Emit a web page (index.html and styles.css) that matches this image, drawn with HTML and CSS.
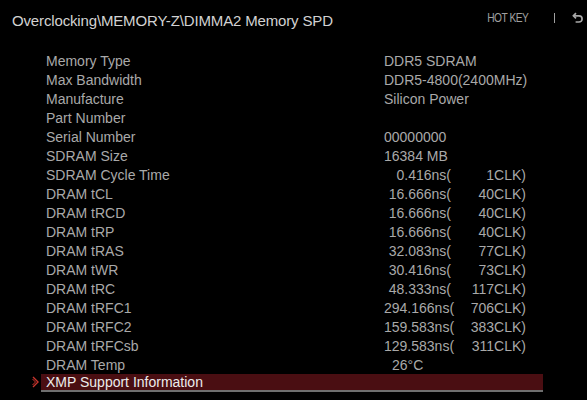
FILE: index.html
```html
<!DOCTYPE html>
<html>
<head>
<meta charset="utf-8">
<link rel="stylesheet" href="styles.css">
</head>
<body>
<div class="screen">
  <header class="top">
    <div class="title">Overclocking\MEMORY-Z\DIMMA2 Memory SPD</div>
    <div class="hotkey">
      <span class="hk">HOT KEY</span>
      <span class="sep"></span>
      <svg class="back" width="12" height="12" viewBox="0 0 12 12"><path d="M4 1.2 L1.4 3.8 L4 6.4" fill="none" stroke="#a8a8a8" stroke-width="1.7"/><path d="M1.8 3.8 H7 A3.1 3.1 0 0 1 7 10 H3.6" fill="none" stroke="#a8a8a8" stroke-width="1.7"/></svg>
    </div>
  </header>
  <div class="list">
    <div class="row"><span class="label">Memory Type</span><span class="val">DDR5 SDRAM</span></div>
    <div class="row"><span class="label">Max Bandwidth</span><span class="val">DDR5-4800(2400MHz)</span></div>
    <div class="row"><span class="label">Manufacture</span><span class="val">Silicon Power</span></div>
    <div class="row"><span class="label">Part Number</span><span class="val"></span></div>
    <div class="row"><span class="label">Serial Number</span><span class="val">00000000</span></div>
    <div class="row"><span class="label">SDRAM Size</span><span class="val">16384 MB</span></div>
    <div class="row"><span class="label">SDRAM Cycle Time</span><span class="val"><span class="ns">0.416ns(</span><span class="clk">1CLK)</span></span></div>
    <div class="row"><span class="label">DRAM tCL</span><span class="val"><span class="ns">16.666ns(</span><span class="clk">40CLK)</span></span></div>
    <div class="row"><span class="label">DRAM tRCD</span><span class="val"><span class="ns">16.666ns(</span><span class="clk">40CLK)</span></span></div>
    <div class="row"><span class="label">DRAM tRP</span><span class="val"><span class="ns">16.666ns(</span><span class="clk">40CLK)</span></span></div>
    <div class="row"><span class="label">DRAM tRAS</span><span class="val"><span class="ns">32.083ns(</span><span class="clk">77CLK)</span></span></div>
    <div class="row"><span class="label">DRAM tWR</span><span class="val"><span class="ns">30.416ns(</span><span class="clk">73CLK)</span></span></div>
    <div class="row"><span class="label">DRAM tRC</span><span class="val"><span class="ns">48.333ns(</span><span class="clk">117CLK)</span></span></div>
    <div class="row"><span class="label">DRAM tRFC1</span><span class="val"><span class="ns">294.166ns(</span><span class="clk">706CLK)</span></span></div>
    <div class="row"><span class="label">DRAM tRFC2</span><span class="val"><span class="ns">159.583ns(</span><span class="clk">383CLK)</span></span></div>
    <div class="row"><span class="label">DRAM tRFCsb</span><span class="val"><span class="ns">129.583ns(</span><span class="clk">311CLK)</span></span></div>
    <div class="row"><span class="label">DRAM Temp</span><span class="val"><span class="temp">26°C</span></span></div>
    <div class="row sel">
      <svg class="chev" width="8" height="12" viewBox="0 0 8 12"><path d="M1 1 L6 6 L1 11" fill="none" stroke="#c8342c" stroke-width="1.4"/><path d="M0.5 3 L3.5 6 L0.5 9" fill="none" stroke="#c8342c" stroke-width="1"/></svg>
      <span class="label">XMP Support Information</span>
    </div>
  </div>
</div>
</body>
</html>
```

FILE: styles.css
```css
html, body {
  margin: 0;
  padding: 0;
  background: #000;
}
.screen {
  width: 587px;
  height: 400px;
  background: #000;
  font-family: "Liberation Sans", Arial, sans-serif;
  overflow: hidden;
}
.top {
  display: flex;
  justify-content: space-between;
  align-items: center;
  height: 40px;
  padding: 0 3px 0 12px;
}
.title {
  color: #d2d2d2;
  font-size: 15px;
  letter-spacing: -0.15px;
}
.hotkey {
  display: flex;
  align-items: center;
  color: #a0a0a0;
  margin-top: -4px;
}
.hk {
  display: inline-block;
  font-size: 12px;
  letter-spacing: -0.6px;
  transform: scaleX(0.85);
  transform-origin: right center;
}
.sep {
  width: 1.5px;
  height: 10px;
  background: #a0a0a0;
  margin: 0 17px 0 25px;
}
.list {
  display: flex;
  flex-direction: column;
  padding-top: 11px;
}
.row {
  display: flex;
  height: 19px;
  align-items: center;
  font-size: 14px;
  color: #a9a9a9;
  padding-left: 46px;
}
.label {
  width: 338px;
  flex: none;
}
.val {
  display: flex;
}
.ns {
  width: 67px;
  text-align: right;
}
.clk {
  width: 75px;
  text-align: right;
}
.temp {
  margin-left: 8px;
}
.sel {
  position: relative;
  margin-left: 41px;
  padding-left: 5px;
  width: 497px;
  height: 16px;
  background: #4a0e12;
  border-bottom: 2px solid #6e6e6e;
  margin-top: 0;
  color: #ececec;
}
.chev {
  position: absolute;
  left: -9px;
  top: 2px;
}
.sel .label {
  width: auto;
}
```
